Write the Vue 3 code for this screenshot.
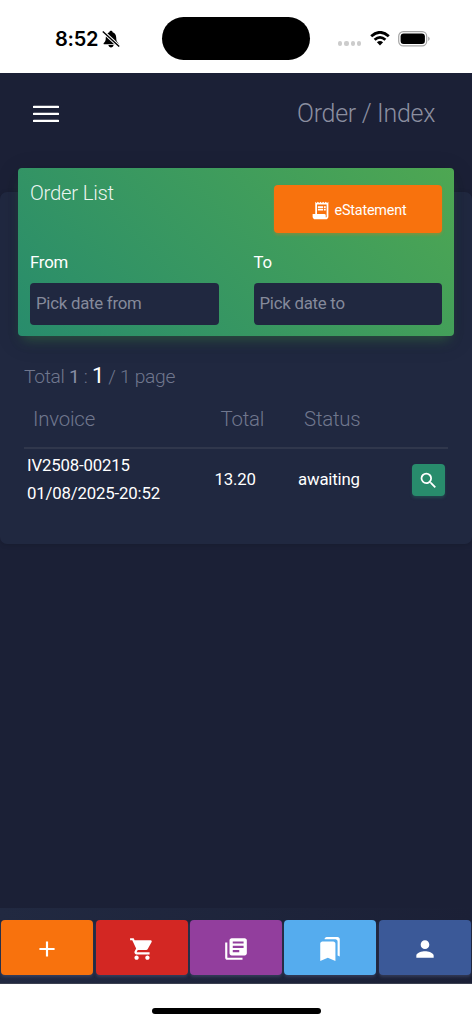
<script setup>
const tabs = [
  { name: 'add', color: '#f8720d', path: 'M19 13h-6v6h-2v-6H5v-2h6V5h2v6h6v2z' },
  { name: 'cart', color: '#d32723', path: 'M7 18c-1.1 0-1.99.9-1.99 2S5.9 22 7 22s2-.9 2-2-.9-2-2-2zM1 2v2h2l3.6 7.59-1.35 2.45c-.16.28-.25.61-.25.96 0 1.1.9 2 2 2h12v-2H7.42c-.14 0-.25-.11-.25-.25l.03-.12.9-1.63h7.45c.75 0 1.41-.41 1.75-1.03l3.58-6.49A1 1 0 0 0 20 4H5.21l-.94-2H1zm16 16c-1.1 0-1.99.9-1.99 2s.89 2 1.99 2 2-.9 2-2-.9-2-2-2z' },
  { name: 'library', color: '#923e9d', path: 'M4 6H2v14c0 1.1.9 2 2 2h14v-2H4V6zm16-4H8c-1.1 0-2 .9-2 2v12c0 1.1.9 2 2 2h12c1.1 0 2-.9 2-2V4c0-1.1-.9-2-2-2zm-1 9H9V9h10v2zm-4 4H9v-2h6v2zm4-8H9V5h10v2z' },
  { name: 'bookmarks', color: '#55acee', path: 'M19 18l2 1V3c0-1.1-.9-2-2-2H8.99C7.89 1 7 1.9 7 3h10c1.1 0 2 .9 2 2v13zM15 5H5c-1.1 0-2 .9-2 2v16l7-3 7 3V7c0-1.1-.9-2-2-2z' },
  { name: 'person', color: '#3b5998', path: 'M12 12c2.21 0 4-1.79 4-4s-1.79-4-4-4-4 1.79-4 4 1.79 4 4 4zm0 2c-2.67 0-8 1.34-8 4v2h16v-2c0-2.66-5.33-4-8-4z' },
]
</script>

<template>
  <div class="screen">
    <header class="status">
      <div class="clock">
        <span>8:52</span>
        <svg class="bell" viewBox="0 0 18 18">
          <path d="M9 .8c.9 0 1.600.6 1.600 1.400 2.300.7 3.600 2.600 3.600 5.200 0 3.300.6 4.200 2 5.500.5.500.2 1.400-.6 1.400H2.400c-.8 0-1.100-.9-.6-1.400 1.400-1.300 2-2.200 2-5.500 0-2.600 1.300-4.500 3.600-5.200C7.400 1.400 8.100.8 9 .8zM6.400 15.100h5.200c-.2 1.500-1.300 2.300-2.600 2.300s-2.400-.8-2.600-2.300z" />
          <path class="slash-gap" d="M1 1.600l16.200 15" />
          <path class="slash" d="M.8 1.600l16.400 15" />
        </svg>
      </div>
      <div class="island"></div>
      <div class="signals">
        <div class="dots"><i v-for="n in 4" :key="n"></i></div>
        <svg class="wifi" viewBox="0 0 20 15">
          <path class="arc" d="M1.200 5.300Q10-2.600 18.800 5.300M4.600 8.800Q10 4 15.400 8.800" />
          <path d="M10 14.500l-3.100-3.300q3.100-2.500 6.200 0z" />
        </svg>
        <svg class="battery" viewBox="0 0 32 16">
          <rect class="case" x=".7" y=".7" width="28" height="14.200" rx="4.600" />
          <rect x="2.600" y="2.500" width="24.300" height="10.600" rx="3" />
          <path class="cap" d="M30.200 5.600q3 2.200 0 4.500z" />
        </svg>
      </div>
    </header>

    <main class="app">
      <nav class="top">
        <svg class="burger" viewBox="0 0 26 18">
          <path d="M1 1.900h24M1 8.900h24M1 15.900h24" />
        </svg>
        <h1>Order / Index</h1>
      </nav>

      <section class="card">
        <div class="filter">
          <div class="filter-head">
            <h2>Order List</h2>
            <button class="statement">
              <svg viewBox="0 0 24 24">
                <path d="M19.500 3.500L18 2l-1.500 1.500L15 2l-1.500 1.500L12 2l-1.500 1.500L9 2 7.500 3.500 6 2v14H3v3c0 1.660 1.340 3 3 3h12c1.660 0 3-1.340 3-3V2l-1.500 1.500zM19 19c0 .55-.45 1-1 1s-1-.45-1-1v-3H8V5h11v14zM9 7h6v2H9zM16 7h2v2h-2zM9 10h6v2H9zM16 10h2v2h-2z" />
                <path d="M4.500 16.500h13.500v4h-12z" />
              </svg>
              <span>eStatement</span>
            </button>
          </div>
          <div class="fields">
            <label>From<input placeholder="Pick date from" /></label>
            <label>To<input placeholder="Pick date to" /></label>
          </div>
        </div>

        <p class="total">Total <b>1</b> : <strong>1</strong> / 1 page</p>
        <div class="row head"><span>Invoice</span><span>Total</span><span>Status</span></div>
        <div class="row body">
          <span>IV2508-00215<br />01/08/2025-20:52</span>
          <span>13.20</span>
          <span>awaiting</span>
          <button class="view">
            <svg viewBox="0 0 24 24">
              <path d="M15.500 14h-.79l-.28-.27A6.471 6.471 0 0 0 16 9.500 6.500 6.500 0 1 0 9.500 16c1.610 0 3.090-.59 4.230-1.570l.27.28v.79l5 4.990L20.490 19l-4.990-5zm-6 0C7.010 14 5 11.990 5 9.500S7.010 5 9.500 5 14 7.010 14 9.500 11.990 14 9.500 14z" />
            </svg>
          </button>
        </div>
      </section>

      <footer class="tabs">
        <button v-for="t in tabs" :key="t.name" :style="{ background: t.color }">
          <svg viewBox="0 0 24 24"><path :d="t.path" /></svg>
        </button>
      </footer>
    </main>
    <div class="home"><i></i></div>
  </div>
</template>

<style>
body { margin: 0; }
</style>

<style scoped>
* { box-sizing: border-box; }
.screen { width: 472px; height: 1024px; display: flex; flex-direction: column; background: #fff; font-family: Roboto, sans-serif; overflow: hidden; }
svg { display: block; fill: currentColor; }
button { border: 0; padding: 0; color: #fff; font: inherit; display: flex; align-items: center; justify-content: center; }
h1, h2, p { margin: 0; font-weight: 300; }

.status { height: 73px; flex: none; display: grid; grid-template-columns: 162px 148px 162px; color: #000; }
.clock { display: flex; height: 43px; margin: 17px 0 0 55px; align-items: center; gap: 4px; font: 600 20px/24px Inter, sans-serif; letter-spacing: -.25px; }
.bell { width: 18px; height: 18px; }
.slash-gap { stroke: #fff; stroke-width: 3.400; }
.slash { stroke: #000; stroke-width: 1.400; }
.island { height: 43px; margin-top: 17px; border-radius: 22px; background: #000; }
.signals { display: flex; height: 43px; margin: 17px 0 0 28px; align-items: center; }
.dots { display: flex; gap: 2.200px; margin: 10px 8.600px 0 0; }
.dots i { width: 4.200px; height: 4.200px; border-radius: 50%; background: #ccc; }
.wifi { width: 20px; height: 15px; }
.arc { fill: none; stroke: #000; stroke-width: 2.800; }
.battery { width: 32px; height: 16px; margin-left: 8px; }
.case { fill: none; stroke: #a5a5a5; stroke-width: 1.200; }
.cap { fill: #a5a5a5; }

.app { height: 911px; flex: none; display: flex; flex-direction: column; background: #1b2036; }
.top { height: 119px; flex: none; display: flex; justify-content: space-between; padding: 0 37px 0 33px; }
.burger { width: 26px; height: 18px; margin-top: 32px; stroke: #fff; stroke-width: 2.400; stroke-linecap: round; }
h1 { padding-top: 26px; font-size: 25px; line-height: 30px; color: #8b8fa0; letter-spacing: -.3px; }

.card { height: 352px; flex: none; padding: 0 18px; background: #202840; border-radius: 7px; box-shadow: 0 1px 5px rgba(0, 0, 0, .14); }
.filter { height: 168px; margin-top: -24px; padding: 12px; border-radius: 4px; background: linear-gradient(45deg, #288c6c, #4ea752); box-shadow: 0 5px 24px rgba(0, 0, 0, .14), 0 8px 12px -5px rgba(76, 175, 80, .4); color: #fff; }
.filter-head { display: flex; justify-content: space-between; }
h2 { font-size: 20.400px; line-height: 26px; color: rgba(255, 255, 255, .92); letter-spacing: -.26px; }
.statement { width: 168px; height: 48px; margin: 5px 0 0; gap: 4px; border-radius: 4px; background: #f8720d; font-size: 14.400px; letter-spacing: -.2px; box-shadow: 0 2px 3px rgba(248, 114, 13, .3); }
.statement svg { width: 21px; height: 21px; margin-top: 2px; }
.statement span { margin-top: 2px; }
.fields { display: grid; grid-template-columns: 188.500px 188.500px; gap: 35px; margin-top: 16.500px; }
label { font-size: 16.800px; line-height: 24px; letter-spacing: -.2px; }
input { display: block; width: 100%; height: 42px; margin: 9px 0 0; padding: 0 6px 1px; border: 0; border-radius: 4px; background: #202840; font: 400 16.800px Roboto, sans-serif; letter-spacing: -.24px; }
input::placeholder { color: #858a9b; opacity: 1; }

.total { margin: 26.500px 0 0 6px; height: 27px; line-height: 26px; font-size: 19.200px; letter-spacing: -.3px; color: #70778e; }
.total b { font-weight: 400; color: #888ea5; }
.total strong { font-size: 22px; font-weight: 400; color: #fff; }
.row { display: grid; grid-template-columns: 187.500px 83.500px 114px 33px; margin: 0 6px; }
.head { height: 59px; padding: 15px 0 0 9px; border-bottom: 2px solid #30374c; font-size: 20.400px; letter-spacing: -.2px; line-height: 28px; font-weight: 300; color: #70778e; }
.body { height: 60px; padding-left: 3px; align-items: center; font-size: 16.800px; letter-spacing: -.17px; line-height: 28px; color: #fff; }
.view { width: 33px; height: 32px; margin-top: 3px; border-radius: 4px; background: #288c6c; box-shadow: 0 2px 3px rgba(40, 140, 108, .3); }
.view svg { width: 21px; height: 21px; }

.tabs { height: 76px; margin-top: auto; padding: 12px 1.300px 0; display: flex; gap: 2.200px; background: linear-gradient(90deg, #212941, #1b2036); border-bottom: 1px solid #3b4050; }
.tabs button { flex: 1; height: 55px; border-radius: 4px; box-shadow: 0 2px 3px rgba(120, 130, 180, .25); }
.tabs svg { width: 26px; height: 26px; margin-top: 3px; }
.home { flex: 1; display: flex; justify-content: center; padding-top: 24px; }
.home i { width: 169px; height: 6px; border-radius: 3px; background: #000; }
</style>
